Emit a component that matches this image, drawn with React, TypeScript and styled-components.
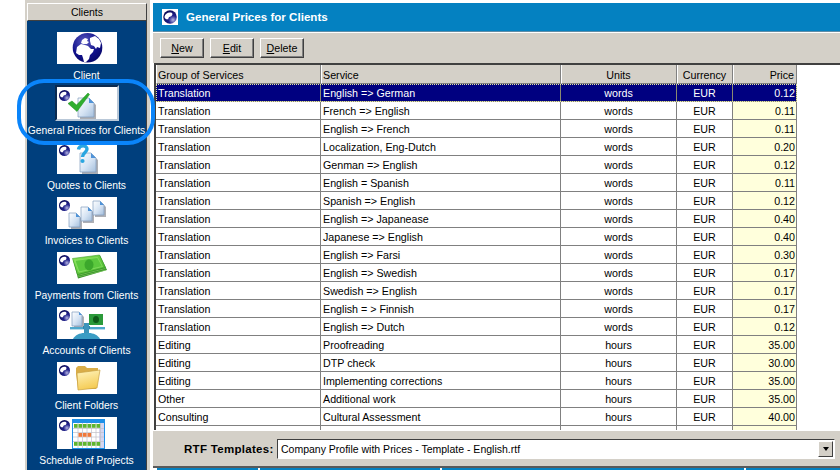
import * as React from "react";
import styled, { createGlobalStyle } from "styled-components";

const GlobalStyle = createGlobalStyle`
  html, body {
    margin: 0;
    padding: 0;
    background: #fff;
    overflow: hidden;
  }
  body {
    font-family: "Liberation Sans", Arial, sans-serif;
    font-size: 10.7px;
    color: #000;
  }
`;

const Page = styled.div`
  position: relative;
  display: flex;
  width: 840px;
  height: 470px;
  overflow: hidden;
  background: #fff;
`;

const SidePanel = styled.aside`
  display: flex;
  flex-direction: column;
  width: 125px;
  height: 470px;
  margin-left: 25px;
  box-sizing: border-box;
  padding: 3px 3px 0 2px;
  background: #d4d0c8;
`;

const SideHeader = styled.div`
  display: flex;
  align-items: center;
  justify-content: center;
  flex-shrink: 0;
  height: 18px;
  box-sizing: border-box;
  background: #d4d0c8;
  border: 1px solid;
  border-color: #fff #404040 #404040 #fff;
  font-size: 10.5px;
`;

const SideList = styled.div`
  flex: 1;
  min-height: 0;
  overflow: hidden;
  display: flex;
  flex-direction: column;
  align-items: center;
  padding-top: 11px;
  background: #003f7d;
  border-right: 1px solid #404040;
`;

const NavItem = styled.div`
  display: flex;
  flex-direction: column;
  align-items: center;
  height: 55px;
  flex-shrink: 0;
  width: 100%;
`;

const Tile = styled.div<{ $selected?: boolean }>`
  width: 60px;
  height: 32px;
  flex-shrink: 0;
  background: #fff;
  box-sizing: content-box;
  ${p => p.$selected && `
    margin: -2px 0;
    border: 2px solid;
    border-color: #0a2a50 #b9c8d8 #b9c8d8 #0a2a50;
  `}
  svg {
    display: block;
    width: 60px;
    height: 32px;
  }
`;

const NavLabel = styled.div`
  height: 23px;
  line-height: 24px;
  color: #fff;
  font-size: 10.3px;
  white-space: nowrap;
  text-align: center;
`;

const HighlightRing = styled.div`
  position: absolute;
  left: 17px;
  top: 79px;
  width: 138px;
  height: 66px;
  box-sizing: border-box;
  border: 4px solid #0a84fa;
  border-radius: 27px;
  pointer-events: none;
`;

const Main = styled.main`
  flex: 1;
  display: flex;
  flex-direction: column;
  height: 470px;
  margin-left: 3px;
  padding-top: 3px;
  box-sizing: border-box;
  min-width: 0;
`;

const TitleBar = styled.header`
  display: flex;
  align-items: center;
  flex-shrink: 0;
  gap: 8px;
  height: 29px;
  box-sizing: border-box;
  padding: 0 0 1px 9px;
  background: #0481c1;
  border-bottom: 1px solid #5f8ea8;
`;

const TitleIcon = styled.div`
  width: 16px;
  height: 16px;
  background: #fff;
  display: flex;
  align-items: center;
  justify-content: center;
`;

const Title = styled.h1`
  margin: 0;
  color: #fff;
  font-size: 11.6px;
  font-weight: bold;
`;

const Toolbar = styled.div`
  display: flex;
  align-items: flex-start;
  flex-shrink: 0;
  gap: 6px;
  height: 31px;
  box-sizing: border-box;
  padding: 5px 0 0 7px;
  background: #d4d0c8;
  border-top: 1px solid #fff;
`;

const ToolButton = styled.button`
  width: 44px;
  height: 20px;
  padding: 0;
  box-sizing: border-box;
  background: #d4d0c8;
  border: 1px solid;
  border-color: #fff #404040 #404040 #fff;
  box-shadow: inset -1px -1px 0 #808080;
  color: #000;
  font: 10.7px "Liberation Sans", Arial, sans-serif;
  u { text-decoration: underline; }
`;

const Grid = styled.div`
  flex-shrink: 0;
  height: 367px;
  margin-left: 1px;
  overflow: hidden;
  background: #fff;
  border-top: 2px solid #404040;
  border-left: 2px solid #404040;
  box-sizing: border-box;
`;

const Row = styled.div<{ $selected?: boolean }>`
  position: relative;
  display: grid;
  grid-template-columns: 165px 240px 116px 56px 64px;
  width: 641px;
  height: 18px;
  ${p => p.$selected && `
    background: #000080;
    color: #fff;
    outline: 1px dotted #e6e6a0;
    outline-offset: -1px;
  `}
`;

const HeaderRow = styled(Row)`
  height: 19px;
`;

const HeaderCell = styled.div<{ $align?: string }>`
  display: flex;
  align-items: center;
  justify-content: ${p => p.$align || "flex-start"};
  padding: 2px 2px 0 1px;
  box-sizing: border-box;
  background: #d4d0c8;
  border-left: 1px solid #fff;
  border-right: 1px solid #808080;
  border-bottom: 1px solid #808080;
`;

const Cell = styled.div<{ $align?: string; $price?: boolean; $selected?: boolean }>`
  padding: 0 ${p => (p.$price ? "1px" : "2px")} 0 2px;
  box-sizing: border-box;
  line-height: 18px;
  text-align: ${p => p.$align || "left"};
  white-space: nowrap;
  overflow: hidden;
  border-right: 1px solid ${p => (p.$selected ? "#8a8a70" : "#808080")};
  border-bottom: 1px solid #808080;
  background: ${p => (p.$price && !p.$selected ? "#ffffdc" : "transparent")};
`;

const BottomPanel = styled.div`
  display: flex;
  align-items: center;
  flex-shrink: 0;
  height: 36px;
  box-sizing: border-box;
  padding: 1px 5px 0 31px;
  background: #d4d0c8;
  border-top: 1px solid #fff;
`;

const FieldLabel = styled.label`
  width: 93px;
  flex-shrink: 0;
  font-size: 11.5px;
  font-weight: bold;
  letter-spacing: 0.3px;
  white-space: nowrap;
`;

const Combo = styled.div`
  flex: 1;
  display: flex;
  align-items: center;
  justify-content: space-between;
  height: 20px;
  box-sizing: border-box;
  padding-left: 3px;
  background: #fff;
  border: 1px solid;
  border-color: #404040 #fff #fff #404040;
  box-shadow: 1px 1px 0 #d4d0c8;
  font-size: 10.5px;
`;

const ComboArrow = styled.div`
  display: flex;
  align-items: center;
  justify-content: center;
  width: 15px;
  height: 16px;
  margin-right: 1px;
  box-sizing: border-box;
  background: #d4d0c8;
  border: 1px solid;
  border-color: #fff #404040 #404040 #fff;
  &::after {
    content: "";
    border-style: solid;
    border-width: 4px 3.5px 0 3.5px;
    border-color: #000 transparent transparent transparent;
  }
`;

const TabStrip = styled.div`
  display: flex;
  flex-shrink: 0;
  gap: 2px;
  height: 2px;
  padding-left: 4px;
  background: #fff;
  border-top: 2px solid #5a5a5a;
`;

const TabEdge = styled.div<{ $width: number }>`
  width: ${p => p.$width}px;
  background: #0481c1;
`;

const Orb = () => (
  <g>
    <defs>
      <radialGradient id="orbFill" cx="0.72" cy="0.72" r="0.8">
        <stop offset="0" stopColor="#b5b5e2" />
        <stop offset="0.4" stopColor="#20208a" />
        <stop offset="1" stopColor="#0a0a55" />
      </radialGradient>
    </defs>
    <circle cx="7.5" cy="8.5" r="5.5" fill="url(#orbFill)" />
    <path d="M3 8.500C3.500 5.500 6.500 4.200 9.200 5.200 10 6.500 9 8 7.500 8.200 6.500 8.300 6 9.300 6.200 10.300 4.500 10.500 3.300 10 3 8.500z" fill="#fff" />
  </g>
);

const Doc = ({ x, y, w, h }: { x: number; y: number; w: number; h: number }) => {
  const fold = Math.round(w * 0.32);
  return (
    <g>
      <defs>
        <linearGradient id="docFill" x1="0" y1="0" x2="1" y2="1">
          <stop offset="0" stopColor="#ffffff" />
          <stop offset="0.55" stopColor="#d5e3f3" />
          <stop offset="1" stopColor="#a5bfdc" />
        </linearGradient>
      </defs>
      <path d={`M${x + 2} ${y + 2}h${w - fold}l${fold} ${fold}v${h - fold}h-${w}z`} fill="#8b8f96" opacity="0.7" />
      <path d={`M${x} ${y}h${w - fold}l${fold} ${fold}v${h - fold}h-${w}z`} fill="url(#docFill)" stroke="#7f9cbd" strokeWidth="0.7" />
      <path d={`M${x + w - fold} ${y}v${fold}h${fold}z`} fill="#4f93d8" />
    </g>
  );
};

const GlobeIcon = () => (
  <svg viewBox="0 0 60 32">
    <defs>
      <radialGradient id="globeFill" cx="0.4" cy="0.3" r="0.8">
        <stop offset="0" stopColor="#5a5ac0" />
        <stop offset="0.6" stopColor="#10108a" />
        <stop offset="1" stopColor="#050560" />
      </radialGradient>
    </defs>
    <circle cx="30.500" cy="15.700" r="14.800" fill="url(#globeFill)" />
    <path d="M20 15l4-3 4 1 3 1 3 3 3 0-1 3-3 3-1 4-3 3-2 0-1-4-1-3-3 0-3-2z" fill="#fff" />
    <path d="M24 11l1-3 3-2 3 1-1 2 2 1-2 2-4 0z" fill="#fff" />
    <path d="M33 6l5-2 4 3 2 4-1 5-3-1-1 2-2-3-3-1-1-4z" fill="#fff" />
  </svg>
);

const CheckIcon = () => (
  <svg viewBox="0 0 60 32">
    <Orb />
    <Doc x={21} y={11} w={16} h={19} />
    <path d="M11 16.500l4-2.500 4.500 4L31 6l1.500 1.500L20 24.500z" fill="#2fae2f" stroke="#1b8a1b" strokeWidth="0.5" />
  </svg>
);

const QuestionIcon = () => (
  <svg viewBox="0 0 60 32">
    <Orb />
    <Doc x={23} y={11} w={16} h={19} />
    <path d="M21.500 7.500C22 3 30 2.500 30 7c0 3.500-4.500 3.500-4.500 8" fill="none" stroke="#2aa6e0" strokeWidth="3.400" />
    <circle cx="25.500" cy="19" r="2.100" fill="#2aa6e0" />
  </svg>
);

const InvoicesIcon = () => (
  <svg viewBox="0 0 60 32">
    <Orb />
    <Doc x={12} y={16} w={11} h={14} />
    <Doc x={24} y={10} w={11} h={14} />
    <Doc x={36} y={4} w={11} h={14} />
  </svg>
);

const MoneyIcon = () => (
  <svg viewBox="0 0 60 32">
    <defs>
      <linearGradient id="cash" x1="0" y1="0" x2="1" y2="1">
        <stop offset="0" stopColor="#8fe85a" />
        <stop offset="1" stopColor="#3fae2a" />
      </linearGradient>
    </defs>
    <Orb />
    <path d="M16 8L43 3.500 50 18 21 26.500z" fill="#2f8a24" />
    <path d="M15.500 6.500L42.500 3 48.500 15.500 20.500 22.500z" fill="url(#cash)" stroke="#3d9e2a" strokeWidth="0.6" />
    <path d="M18 8.500L40.500 5.500 45.500 14.500 22 20z" fill="#5cc83e" stroke="#a5ee7a" strokeWidth="0.5" />
    <ellipse cx="32" cy="12.800" rx="4.500" ry="5.500" fill="#3ca82c" />
    <path d="M20.500 23.500L48.500 16.500M21 25L49 18" stroke="#8fdc68" strokeWidth="0.6" />
  </svg>
);

const ScaleIcon = () => (
  <svg viewBox="0 0 60 32">
    <Orb />
    <Doc x={15} y={5} w={10} h={14} />
    <rect x="32" y="7" width="14" height="11" fill="#2b9a3a" />
    <ellipse cx="39" cy="12.500" rx="3" ry="3.600" fill="#0e5a18" />
    <rect x="13" y="20" width="35" height="2.400" fill="#4fa8cc" />
    <rect x="26" y="19" width="7" height="3" fill="#2f86ad" />
    <rect x="27" y="16" width="5" height="10" fill="#3c94ba" />
    <path d="M16 32c2-4 7-6 11-6h5c4 0 9 2 11 6z" fill="#3a9cc4" />
  </svg>
);

const FolderIcon = () => (
  <svg viewBox="0 0 60 32">
    <defs>
      <linearGradient id="folderFill" x1="0" y1="0" x2="0.3" y2="1">
        <stop offset="0" stopColor="#fff5c0" />
        <stop offset="1" stopColor="#f5cc55" />
      </linearGradient>
    </defs>
    <Orb />
    <path d="M19 6l2-2h7l2 2 11 0v4L39 27H21L19 12z" fill="#d9ad48" />
    <path d="M20 11l23-3-3 18-19 2z" fill="url(#folderFill)" stroke="#c9a040" strokeWidth="0.7" />
  </svg>
);

const CAL_X = [17, 21.5, 26, 30.5, 35, 39.5];
const CAL_ROWS: { y: number; fill: string; only?: number[] }[] = [
  { y: 7, fill: "#5fb52f" },
  { y: 16, fill: "#f0793a", only: [1, 2, 3] },
  { y: 25, fill: "#5fb52f" },
];

const CalendarIcon = () => (
  <svg viewBox="0 0 60 32">
    <Orb />
    <rect x="15" y="2" width="33" height="30" fill="#1e90e8" />
    <rect x="16" y="6" width="31" height="25" fill="#fff" />
    <rect x="42" y="6" width="5" height="25" fill="#d5d5f0" />
    <path d="M16 11.500h31M16 15.500h31M16 20h31M16 24.500h31M21 6v25M25.500 6v25M30 6v25M34.500 6v25M39 6v25M43.500 6v25" stroke="#c0c0c8" strokeWidth="0.7" />
    {CAL_ROWS.map(r =>
      CAL_X.map((x, i) =>
        !r.only || r.only.includes(i) ? (
          <rect key={`${r.y}-${i}`} x={x} y={r.y} width="3.6" height="3.8" fill={r.fill} />
        ) : null
      )
    )}
  </svg>
);

const navItems = [
  { label: "Client", icon: <GlobeIcon /> },
  { label: "General Prices for Clients", icon: <CheckIcon />, selected: true },
  { label: "Quotes to Clients", icon: <QuestionIcon /> },
  { label: "Invoices to Clients", icon: <InvoicesIcon /> },
  { label: "Payments from Clients", icon: <MoneyIcon /> },
  { label: "Accounts of Clients", icon: <ScaleIcon /> },
  { label: "Client Folders", icon: <FolderIcon /> },
  { label: "Schedule of Projects", icon: <CalendarIcon /> },
];

const prices = [
  ["Translation", "English => German", "words", "0.12"],
  ["Translation", "French => English", "words", "0.11"],
  ["Translation", "English => French", "words", "0.11"],
  ["Translation", "Localization, Eng-Dutch", "words", "0.20"],
  ["Translation", "Genman => English", "words", "0.12"],
  ["Translation", "English = Spanish", "words", "0.11"],
  ["Translation", "Spanish => English", "words", "0.12"],
  ["Translation", "English => Japanease", "words", "0.40"],
  ["Translation", "Japanese => English", "words", "0.40"],
  ["Translation", "English => Farsi", "words", "0.30"],
  ["Translation", "English => Swedish", "words", "0.17"],
  ["Translation", "Swedish => English", "words", "0.17"],
  ["Translation", "English = > Finnish", "words", "0.17"],
  ["Translation", "English => Dutch", "words", "0.12"],
  ["Editing", "Proofreading", "hours", "35.00"],
  ["Editing", "DTP check", "hours", "30.00"],
  ["Editing", "Implementing corrections", "hours", "35.00"],
  ["Other", "Additional work", "hours", "35.00"],
  ["Consulting", "Cultural Assessment", "hours", "40.00"],
  ["", "", "", ""],
];

const App = () => {
  return (
    <Page>
      <GlobalStyle />
      <SidePanel>
        <SideHeader>Clients</SideHeader>
        <SideList>
          {navItems.map(item => (
            <NavItem key={item.label}>
              <Tile $selected={item.selected}>{item.icon}</Tile>
              <NavLabel>{item.label}</NavLabel>
            </NavItem>
          ))}
        </SideList>
      </SidePanel>
      <HighlightRing />
      <Main>
        <TitleBar>
          <TitleIcon>
            <svg width="16" height="16" viewBox="1 2 13 13">
              <Orb />
            </svg>
          </TitleIcon>
          <Title>General Prices for Clients</Title>
        </TitleBar>
        <Toolbar>
          <ToolButton><u>N</u>ew</ToolButton>
          <ToolButton><u>E</u>dit</ToolButton>
          <ToolButton><u>D</u>elete</ToolButton>
        </Toolbar>
        <Grid>
          <HeaderRow>
            <HeaderCell>Group of Services</HeaderCell>
            <HeaderCell>Service</HeaderCell>
            <HeaderCell $align="center">Units</HeaderCell>
            <HeaderCell $align="center">Currency</HeaderCell>
            <HeaderCell $align="flex-end">Price</HeaderCell>
          </HeaderRow>
          {prices.map((row, i) => {
            const selected = i === 0;
            return (
              <Row key={i} $selected={selected}>
                <Cell $selected={selected}>{row[0]}</Cell>
                <Cell $selected={selected}>{row[1]}</Cell>
                <Cell $selected={selected} $align="center">{row[2]}</Cell>
                <Cell $selected={selected} $align="center">{row[0] && "EUR"}</Cell>
                <Cell $selected={selected} $align="right" $price>{row[3]}</Cell>
              </Row>
            );
          })}
        </Grid>
        <BottomPanel>
          <FieldLabel>RTF Templates:</FieldLabel>
          <Combo>
            <span>Company Profile with Prices - Template - English.rtf</span>
            <ComboArrow />
          </Combo>
        </BottomPanel>
        <TabStrip>
          <TabEdge $width={101} />
          <TabEdge $width={181} />
          <TabEdge $width={303} />
          <TabEdge $width={94} />
        </TabStrip>
      </Main>
    </Page>
  );
};

export default App;
